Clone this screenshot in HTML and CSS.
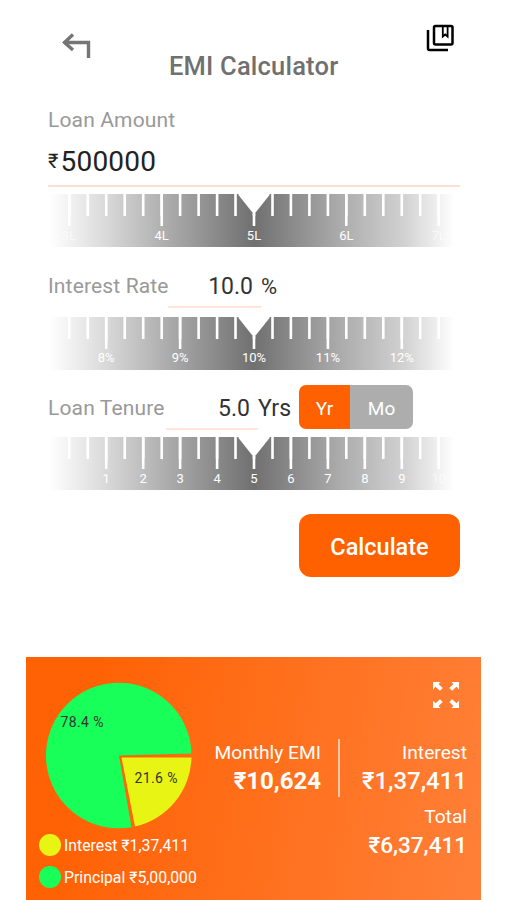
FILE: index.html
```html
<!DOCTYPE html>
<html lang="en">
<head>
<meta charset="UTF-8">
<meta name="viewport" content="width=device-width, initial-scale=1.0">
<title>EMI Calculator</title>
<link rel="stylesheet" href="styles.css">
</head>
<body>
  <!-- shared ruler parts -->
  <svg class="defs" width="0" height="0">
    <defs>
      <linearGradient id="shade">
        <stop offset="0.005" stop-color="#fff"/>
        <stop offset="0.13" stop-color="#dcdcdc"/>
        <stop offset="0.3" stop-color="#a9a9a9"/>
        <stop offset="0.5" stop-color="#707070"/>
        <stop offset="0.7" stop-color="#a9a9a9"/>
        <stop offset="0.87" stop-color="#d3d3d3"/>
        <stop offset="0.985" stop-color="#fff"/>
      </linearGradient>
      <g id="ruler">
        <rect width="412" height="53" fill="url(#shade)"/>
        <path fill="#fff" d="M190.500-1h31v2L208 18h-4L190.500 1z"/>
        <path class="ticks" d="M21.300 0v22M39.800 0v22M58.200 0v22M76.700 0v22M95.200 0v22M113.700 0v22M132.100 0v22M150.600 0v22M169.100 0v22M187.500 0v22M206 0v22M224.500 0v22M242.900 0v22M261.400 0v22M279.900 0v22M298.300 0v22M316.800 0v22M335.300 0v22M353.800 0v22M372.200 0v22M390.700 0v22"/>
      </g>
    </defs>
  </svg>

  <div class="app">
    <header>
      <svg class="back" width="30" height="28" viewBox="0 0 30 28">
        <path d="M12 2.500L3.500 10.500l8.500 7.500M3 10.500h24.500v15.500"/>
      </svg>
      <h1>EMI Calculator</h1>
      <svg class="saved" width="32" height="32" viewBox="0 0 32 32">
        <rect x="10" y="4" width="18.500" height="18.500" rx="1.500"/>
        <path d="M4 8v18.500q0 1.500 1.500 1.500H24"/>
        <path class="ribbon" d="M18.800 4v10.500l2.400-2 2.400 2V4"/>
      </svg>
    </header>

    <main>
      <section class="amount">
        <label>Loan Amount</label>
        <div class="amount-value"><span class="rupee">₹</span><span>500000</span></div>
        <svg class="ruler" width="412" height="53" viewBox="0 0 412 53">
          <use href="#ruler"/>
          <path class="ticks" d="M21.300 0v32M113.700 0v32M206 0v32M298.300 0v32M390.700 0v32"/>
          <g class="marks"><text class="faint" x="21" y="46">3L</text><text x="113.700" y="46">4L</text><text x="206" y="46">5L</text><text x="298.300" y="46">6L</text><text class="faint" x="390.700" y="46">7L</text></g>
        </svg>
      </section>

      <section class="rate">
        <div class="row">
          <label>Interest Rate</label>
          <span class="value">10.0</span>
          <span class="unit">%</span>
        </div>
        <svg class="ruler" width="412" height="53" viewBox="0 0 412 53">
          <use href="#ruler"/>
          <path class="ticks" d="M58.200 0v32M132.100 0v32M206 0v32M279.900 0v32M353.800 0v32"/>
          <g class="marks"><text x="58.200" y="45">8%</text><text x="132.100" y="45">9%</text><text x="206" y="45">10%</text><text x="279.900" y="45">11%</text><text x="353.800" y="45">12%</text></g>
        </svg>
      </section>

      <section class="tenure">
        <div class="row">
          <label>Loan Tenure</label>
          <span class="value">5.0</span>
          <span class="unit">Yrs</span>
          <div class="toggle">
            <button class="active">Yr</button>
            <button>Mo</button>
          </div>
        </div>
        <svg class="ruler" width="412" height="53" viewBox="0 0 412 53">
          <use href="#ruler"/>
          <path class="ticks" d="M58.200 0v32M95.200 0v32M132.100 0v32M169.100 0v32M206 0v32M242.900 0v32M279.900 0v32M316.800 0v32M353.800 0v32M390.700 0v32"/>
          <g class="marks"><text x="58.200" y="46">1</text><text x="95.200" y="46">2</text><text x="132.100" y="46">3</text><text x="169.100" y="46">4</text><text x="206" y="46">5</text><text x="242.900" y="46">6</text><text x="279.900" y="46">7</text><text x="316.800" y="46">8</text><text x="353.800" y="46">9</text><text class="faint" x="390.700" y="46">10</text></g>
        </svg>
      </section>

      <button class="calculate">Calculate</button>
    </main>

    <div class="result">
      <div class="chart">
        <svg width="148" height="148" viewBox="0 0 148 148">
          <path fill="#18ff5a" d="M74 73.500L146.500 71.500A72.800 72.800 0 1 0 86.500 145.200z"/>
          <path fill="#e8f514" d="M76.500 75.500H146.500A72.800 72.800 0 0 1 90 144.500z"/>
          <text x="15.500" y="44.500" textLength="43">78.4 %</text>
          <text x="89.500" y="101" textLength="43">21.6 %</text>
        </svg>
        <div class="legend"><i class="dot yellow"></i>Interest ₹1,37,411</div>
        <div class="legend principal"><i class="dot green"></i>Principal ₹5,00,000</div>
      </div>
      <div class="emi">
        <p>Monthly EMI</p>
        <b>₹10,624</b>
      </div>
      <div class="totals">
        <svg class="expand" width="28" height="28" viewBox="0 0 28 28">
          <path d="M1 1h7.500L6.500 3l4.200 4L8 9.800 3.500 5.800 1 8.500zM27 1h-7.500l2 2-4.200 4L20 9.800l4.500-4L27 8.500zM1 27h7.500l-2-2 4.200-4L8 18.200l-4.500 4L1 19.500zM27 27h-7.500l2-2-4.200-4 2.700-2.800 4.500 4L27 19.500z"/>
        </svg>
        <p>Interest</p>
        <b>₹1,37,411</b>
        <p class="total">Total</p>
        <b class="total-value">₹6,37,411</b>
      </div>
    </div>
  </div>
</body>
</html>
```
FILE: styles.css
```css
* {
  box-sizing: border-box;
}
body {
  margin: 0;
  background: #fff;
  font-family: Roboto, "Noto Sans", sans-serif;
  color: #333;
}
h1, p {
  margin: 0;
}
button {
  border: none;
  padding: 0;
  font-family: inherit;
  color: #fff;
}
svg {
  display: block;
}
.defs {
  position: absolute;
}
.app {
  height: 900px;
  overflow: hidden;
  display: flex;
  flex-direction: column;
}
header {
  height: 108px;
  padding: 22px 50px 0 61px;
  display: flex;
  align-items: flex-start;
}
.back {
  margin-top: 10px;
  fill: none;
  stroke: #757575;
  stroke-width: 3.4;
}
h1 {
  width: 170px;
  margin: 29px 0 0 78px;
  font-size: 25.5px;
  line-height: 30px;
  font-weight: 500;
  letter-spacing: 0.2px;
  color: #707070;
  white-space: nowrap;
}
.saved {
  margin-left: auto;
  fill: none;
  stroke: #000;
  stroke-width: 2.5;
}
.ribbon {
  stroke-width: 1.8;
}
main {
  height: 549px;
  padding: 0 46px 0 48px;
  display: flex;
  flex-direction: column;
}
label {
  font-size: 21px;
  line-height: 24px;
  letter-spacing: 0.15px;
  color: #999;
  white-space: nowrap;
}
.amount {
  height: 164px;
}
.amount label {
  display: block;
}
.amount-value {
  height: 55px;
  padding-top: 5px;
  border-bottom: 2px solid #ffdfcf;
  display: flex;
  align-items: center;
  font-size: 28px;
  letter-spacing: 0.2px;
  color: #222;
}
.rupee {
  font-size: 20px;
  margin-right: 2px;
}
.ruler {
  width: 412px;
}
.amount .ruler {
  margin-top: 7px;
}
.ticks {
  stroke: #fff;
  stroke-width: 2.6;
}
.marks {
  fill: #fff;
  font-size: 13px;
  text-anchor: middle;
}
.faint {
  opacity: 0.6;
}
.row {
  display: flex;
  height: 36px;
  margin-bottom: 9px;
}
.row label {
  padding-top: 2px;
}
.value {
  height: 36px;
  padding-top: 1px;
  border-bottom: 2px solid #ffe4d7;
  font-size: 23px;
  line-height: 28px;
  text-align: right;
}
.unit {
  padding-top: 1px;
  font-size: 23px;
  line-height: 28px;
}
.rate {
  height: 113px;
}
.rate label {
  width: 120px;
}
.rate .value {
  width: 93px;
  padding-right: 8px;
}
.rate .unit {
  font-size: 22px;
}
.tenure {
  height: 129px;
}
.tenure label {
  width: 118px;
}
.tenure .row {
  height: 44px;
  padding-top: 9px;
  margin-bottom: 8px;
}
.tenure .value {
  width: 92px;
  height: 36px;
  padding-right: 8px;
}
.toggle {
  display: flex;
  width: 114px;
  height: 44px;
  margin: -9px 0 0 8px;
  border-radius: 7px;
  overflow: hidden;
}
.toggle button {
  flex: 1;
  padding-top: 2px;
  font-size: 19px;
  background: #adadad;
}
.toggle .active {
  flex: 0 0 51px;
  background: #ff6000;
}
.calculate {
  width: 161px;
  height: 63px;
  padding-top: 2px;
  align-self: flex-end;
  border-radius: 12px;
  background: #ff6000;
  font-size: 23.5px;
  font-weight: 500;
}
.result {
  flex: 1;
  margin: 0 25px 0 26px;
  padding-right: 14px;
  display: flex;
  background: linear-gradient(100deg, #ff6205 15%, #ff8038);
  color: #fff;
}
.chart {
  width: 182px;
  padding: 25px 0 0 13px;
}
.chart svg {
  margin-left: 6px;
  fill: #333;
  font-size: 14px;
}
.legend {
  display: flex;
  align-items: center;
  height: 22px;
  margin-top: 4px;
  gap: 3px;
  font-size: 15.8px;
  white-space: nowrap;
}
.principal {
  margin-top: 10px;
}
.dot {
  width: 22px;
  height: 22px;
  border-radius: 50%;
}
.yellow {
  background: #e8f514;
}
.green {
  background: #18ff5a;
}
.emi {
  width: 132px;
  height: 58px;
  margin-top: 82px;
  padding-right: 17px;
  border-right: 2px solid #ffc9a8;
}
.emi, .totals {
  font-size: 19.2px;
  line-height: 28px;
  text-align: right;
  white-space: nowrap;
}
.emi b, .totals b {
  display: block;
  font-size: 24px;
}
.emi p, .emi b {
  margin-left: -10px;
}
.totals {
  flex: 1;
  padding-top: 24px;
}
.totals b {
  font-weight: 500;
}
.totals .total-value {
  font-size: 22.5px;
}
.expand {
  margin: 0 7px 30px auto;
  fill: #fff;
}
.total {
  margin-top: 8px;
}
```
